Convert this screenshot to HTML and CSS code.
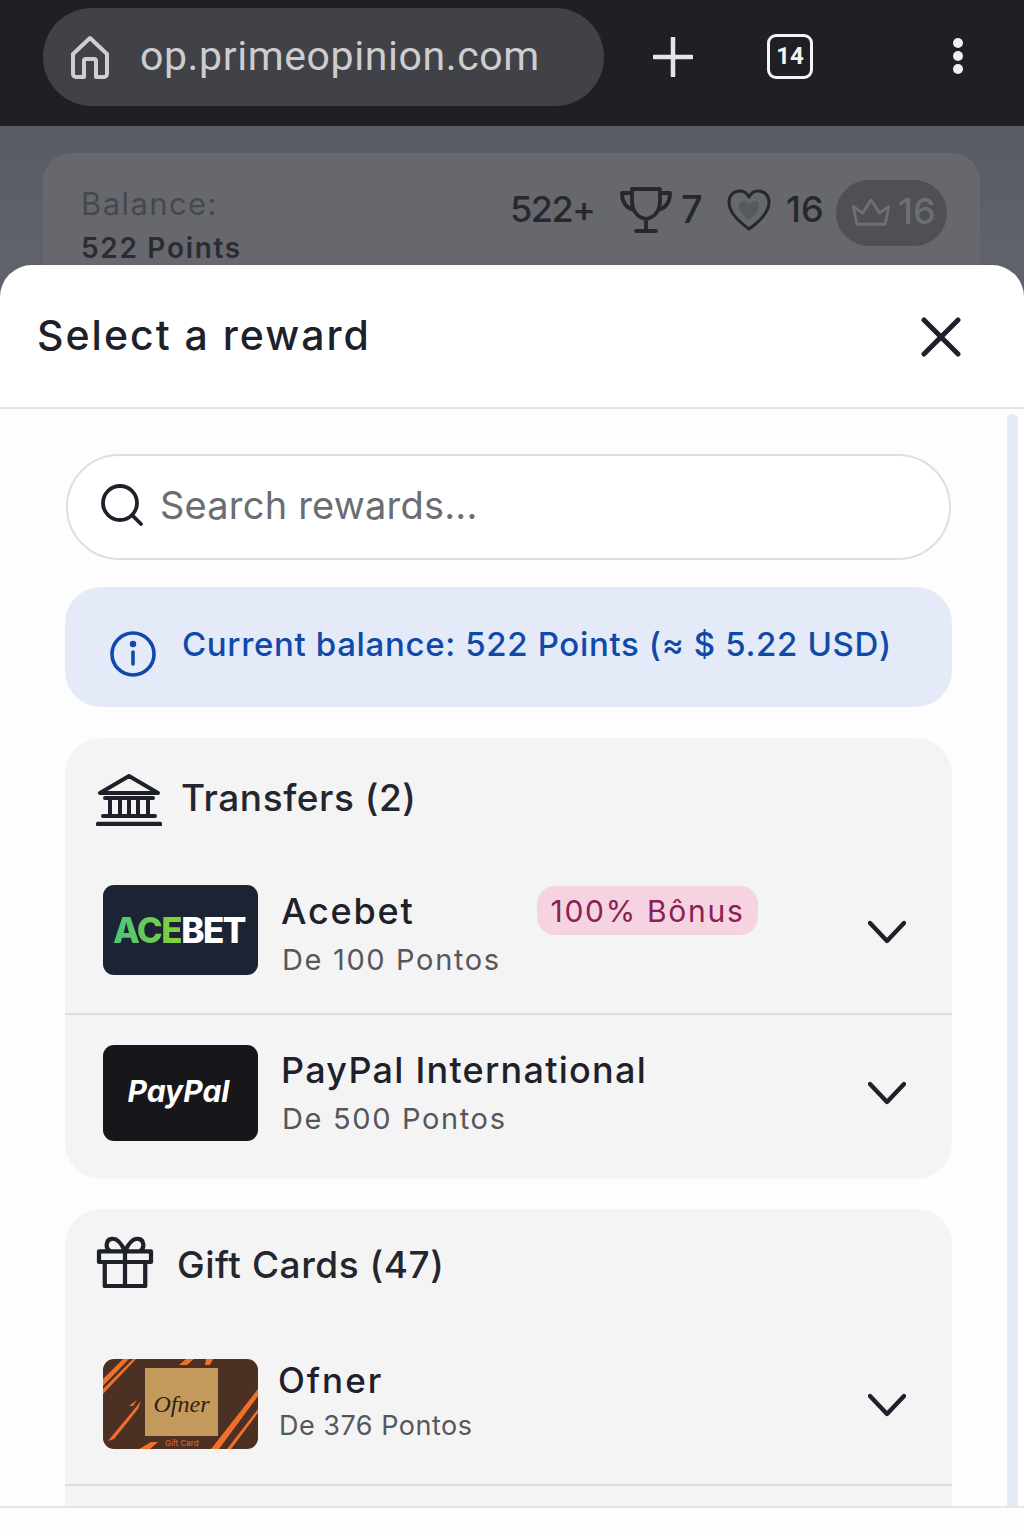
FILE: index.html
```html
<!DOCTYPE html>
<html lang="en">
<head>
<meta charset="utf-8">
<title>Select a reward</title>
<link rel="stylesheet" href="styles.css">
</head>
<body>
<div class="page">
  <header class="browser">
    <div class="address">
      <svg class="home-icon" viewBox="0 0 40 44" fill="none" stroke="currentColor" stroke-width="4" stroke-linejoin="round" stroke-linecap="round"><path d="M20 3 3 19v20a3 3 0 0 0 3 3h8V26a2 2 0 0 1 2-2h8a2 2 0 0 1 2 2v16h8a3 3 0 0 0 3-3V19Z"/></svg>
      <span class="url">op.primeopinion.com</span>
    </div>
    <svg class="plus" viewBox="0 0 40 40" fill="none" stroke="currentColor" stroke-width="4.5" stroke-linecap="round"><path d="M20 1v38M1 20h38"/></svg>
    <div class="tabs">14</div>
    <div class="dots"><i></i><i></i><i></i></div>
  </header>

  <section class="backdrop">
    <div class="stats-card">
      <div class="balance">
        <div class="balance-label">Balance:</div>
        <div class="balance-value">522 Points</div>
      </div>
      <div class="stats">
        <span class="stat s-points">522+</span>
        <svg class="trophy" viewBox="0 0 52 46" fill="none" stroke="currentColor" stroke-width="3.8" stroke-linejoin="round" stroke-linecap="round"><path d="M12 2h28v12c0 10-6 17-14 18-8-1-14-8-14-18ZM12 6H2c0 10 4 15 12 17M40 6h10c0 10-4 15-12 17M26 32v10M16 44h20"/></svg>
        <span class="stat s-seven">7</span>
        <svg class="heart" viewBox="0 0 44 42" stroke="currentColor" stroke-width="3" stroke-linejoin="round" fill="none"><path d="M22 40C10 31 2 23 2 13 2 6 7 2 13 2c4 0 7 2 9 6 2-4 5-6 9-6 6 0 11 4 11 11 0 10-8 18-20 27Z"/><path class="heart-fill" d="M22 31c-6-5-10-9-10-14 0-3 2-5 5-5 2 0 4 1 5 4 1-3 3-4 5-4 3 0 5 2 5 5 0 5-4 9-10 14Z"/></svg>
        <span class="stat s-sixteen">16</span>
        <div class="crown-pill">
          <svg class="crown" viewBox="0 0 42 32" fill="none" stroke="currentColor" stroke-width="3" stroke-linejoin="round"><path d="M6 28 2 9l10 7 9-14 9 14 10-7-4 19Z"/></svg>
          <span>16</span>
        </div>
      </div>
    </div>
  </section>

  <div class="sheet">
    <div class="sheet-head">
      <h1 class="sheet-title">Select a reward</h1>
      <svg class="close" viewBox="0 0 40 40" fill="none" stroke="currentColor" stroke-width="5" stroke-linecap="round"><path d="M3 3l34 34M37 3 3 37"/></svg>
    </div>
    <div class="sheet-body">
      <div class="scroll-content">
        <div class="search">
          <svg class="search-icon" viewBox="0 0 42 42" fill="none" stroke="currentColor" stroke-width="3.8" stroke-linecap="round"><circle cx="19" cy="19" r="17"/><path d="m31.500 31.500 8.500 8.500"/></svg>
          <span class="search-text">Search rewards...</span>
        </div>
        <div class="info">
          <svg class="info-icon" viewBox="0 0 46 46" fill="none" stroke="currentColor" stroke-width="3.6" stroke-linecap="round"><circle cx="23" cy="23" r="21"/><path d="M23 21v12"/><circle cx="23" cy="13" r="1.400" fill="currentColor"/></svg>
          <span class="info-text">Current balance: 522 Points (≈ $ 5.22 USD)</span>
        </div>

        <section class="group">
          <div class="group-head transfers-head">
            <svg class="bank-icon" viewBox="0 0 66 52" fill="none" stroke="currentColor" stroke-width="4" stroke-linejoin="round" stroke-linecap="round"><path d="M33 2 4 19h58ZM9 24h48M14 24v18M24 24v18M33 24v18M42 24v18M52 24v18M7 42h52"/><path stroke-width="4.4" d="M2 50h62"/></svg>
            <h2 class="group-title">Transfers (2)</h2>
          </div>
          <div class="row row-acebet">
            <div class="thumb thumb-acebet"><span class="ace">ACE</span><span class="bet">BET</span></div>
            <div class="row-info">
              <div class="row-name">Acebet</div>
              <div class="row-sub">De 100 Pontos</div>
            </div>
            <span class="badge">100% Bônus</span>
            <svg class="chev" viewBox="0 0 38 24" fill="none" stroke="currentColor" stroke-width="4.400" stroke-linecap="round" stroke-linejoin="round"><path d="m2 3 17 18L36 3"/></svg>
          </div>
          <div class="row row-paypal">
            <div class="thumb thumb-paypal">PayPal</div>
            <div class="row-info">
              <div class="row-name">PayPal International</div>
              <div class="row-sub">De 500 Pontos</div>
            </div>
            <svg class="chev" viewBox="0 0 38 24" fill="none" stroke="currentColor" stroke-width="4.400" stroke-linecap="round" stroke-linejoin="round"><path d="m2 3 17 18L36 3"/></svg>
          </div>
        </section>

        <section class="group group-gift">
          <div class="group-head gift-head">
            <svg class="gift-icon" viewBox="0 0 60 54" fill="none" stroke="currentColor" stroke-width="4.400" stroke-linejoin="round" stroke-linecap="round"><path d="M3 16h54v11H3ZM9 27v25h42V27M30 16v36M30 16c-4-9-9-14-14-13-6 1-7 10-1 13M30 16c4-9 9-14 14-13 6 1 7 10 1 13"/></svg>
            <h2 class="group-title">Gift Cards (47)</h2>
          </div>
          <div class="row row-ofner">
            <div class="thumb thumb-ofner">
              <svg class="ofner-stripes" viewBox="0 0 155 90" preserveAspectRatio="none" fill="#f0702a"><path d="M0 20 20 0h6L0 27ZM0 30 30 0h3L0 35ZM5 82l33-40-3 8-24 30ZM26 47l8-6-4 6ZM76 6l7-6h8l-7 6ZM102 6l1-6h7l-3 6ZM108 90l47-60v7l-39 53ZM124 90l31-40v4l-27 36ZM36 90l12-7h7l-8 7Z"/></svg>
              <div class="ofner-card"><span>Ofner</span></div>
              <span class="ofner-foot">Gift Card</span>
            </div>
            <div class="row-info row-info-ofner">
              <div class="row-name">Ofner</div>
              <div class="row-sub">De 376 Pontos</div>
            </div>
            <svg class="chev" viewBox="0 0 38 24" fill="none" stroke="currentColor" stroke-width="4.400" stroke-linecap="round" stroke-linejoin="round"><path d="m2 3 17 18L36 3"/></svg>
          </div>
        </section>
      </div>
      <div class="scrollbar"></div>
    </div>
    <div class="sheet-foot"></div>
  </div>
</div>
</body>
</html>
```

FILE: styles.css
```css
* { box-sizing: border-box; }
html, body { margin: 0; padding: 0; }
body { font-family: "Inter", "Liberation Sans", sans-serif; background: #fff; }
h1, h2 { margin: 0; font-weight: 500; }

.page { position: relative; width: 1024px; height: 1536px; overflow: hidden; background: #5a5d64; }

.browser { height: 126px; background: #202024; display: flex; align-items: flex-start; color: #e6e6e8; }
.address { margin: 8px 0 0 43px; width: 561px; height: 98px; border-radius: 49px; background: #414248; display: flex; align-items: center; padding-left: 27px; color: #cfcfd2; }
.home-icon { width: 40px; height: 44px; flex: none; }
.url { margin: -2px 0 0 30px; font-family: "Roboto", sans-serif; font-size: 41px; letter-spacing: 0.6px; color: #cdcdd0; }
.plus { width: 40px; height: 40px; margin: 37px 0 0 49px; flex: none; }
.tabs { margin: 34px 0 0 74px; width: 46px; height: 45px; border: 3.5px solid #f4f4f4; border-radius: 9px; color: #f4f4f4; font: 700 24px/38px "Roboto", sans-serif; text-align: center; flex: none; }
.dots { margin: 38px 0 0 140px; width: 11px; display: flex; flex-direction: column; gap: 3px; }
.dots i { display: block; width: 10px; height: 10px; border-radius: 50%; background: #f0f0f0; }

.backdrop { height: 1410px; padding: 27px 44px 0 43px; background: linear-gradient(#585b63, #5f6268 120px); }
.stats-card { height: 200px; border-radius: 28px; background: #66686e; display: flex; justify-content: space-between; padding: 27px 33px 0 38px; color: #26282d; }
.balance-label { font-size: 31px; color: #46484d; line-height: 46px; letter-spacing: 1.4px; margin-top: 1px; }
.balance-value { font-size: 28px; font-weight: 600; color: #2a2c31; line-height: 44px; margin-top: -1px; letter-spacing: 1.7px; }
.stats { display: flex; align-items: flex-start; height: 66px; }
.stat { font-size: 36px; font-weight: 500; line-height: 58px; }
.s-points { width: 110px; margin-left: -1px; letter-spacing: -1.5px; }
.trophy { width: 52px; height: 46px; margin-top: 7px; color: #26282d; flex: none; }
.s-seven { margin-left: 9px; width: 46px; font-size: 38px; }
.heart { width: 44px; height: 42px; margin-top: 9px; flex: none; }
.heart-fill { fill: #565960; stroke: none; }
.s-sixteen { margin-left: 15px; width: 50px; }
.crown-pill { width: 111px; height: 66px; border-radius: 33px; background: #4e5056; display: flex; align-items: center; padding-left: 15px; color: #6d6f75; font-size: 36px; font-weight: 500; }
.crown { width: 40px; height: 30px; }
.crown-pill span { margin: -4px 0 0 7px; }

.sheet { position: absolute; left: 0; right: 0; top: 265px; bottom: 0; background: #fff; border-radius: 32px 32px 0 0; display: flex; flex-direction: column; }
.sheet-head { height: 144px; flex: none; border-bottom: 2px solid #e4e4e8; display: flex; align-items: center; justify-content: space-between; padding: 0 63px 2px 37px; }
.sheet-title { font-size: 41px; font-weight: 500; color: #1f212a; letter-spacing: 2px; }
.close { width: 40px; height: 40px; color: #1f212a; margin-top: 4px; }
.sheet-body { flex: 1; min-height: 0; display: flex; background: #fdfdfe; overflow: hidden; }
.scroll-content { width: 952px; flex: none; padding: 45px 0 0 65px; }
.scrollbar { width: 11px; margin: 5px 0 0 55px; border-radius: 6px 6px 0 0; background: #e6e9f6; }
.sheet-foot { height: 30px; flex: none; border-top: 2px solid #e6e6ea; background: #fdfdfe; }

.search { height: 106px; margin: 0 1px; border: 2px solid #dedee2; border-radius: 53px; background: #fff; display: flex; align-items: center; padding: 0 0 4px 33px; }
.search-icon { width: 42px; height: 42px; color: #1f212a; flex: none; }
.search-text { margin-left: 17px; font-size: 38px; color: #6b6d72; letter-spacing: 0.2px; }

.info { margin-top: 27px; height: 120px; border-radius: 36px; background: #e4eaf8; display: flex; align-items: flex-start; padding: 0 0 0 45px; color: #104aa8; }
.info-icon { width: 46px; height: 46px; margin-top: 44px; flex: none; }
.info-text { margin: 34px 0 0 26px; font-size: 33px; line-height: 46px; white-space: nowrap; font-weight: 500; letter-spacing: 0.65px; }

.group { margin-top: 31px; border-radius: 36px; background: #f4f4f5; padding-bottom: 8px; }
.group-gift { margin-top: 30px; padding-bottom: 80px; }
.group-head { display: flex; align-items: center; padding-left: 31px; color: #1f212a; }
.transfers-head { height: 108px; padding-top: 16px; }
.gift-head { height: 114px; }
.group-title { font-size: 37px; font-weight: 500; color: #24262e; letter-spacing: 0.55px; }
.bank-icon { width: 66px; height: 52px; flex: none; }
.transfers-head .group-title { margin: -6px 0 0 19px; }
.gift-icon { width: 58px; height: 52px; flex: none; margin-top: -8px; }
.gift-head .group-title { margin: -4px 0 0 23px; }

.row { display: flex; align-items: center; padding-left: 38px; padding-right: 46px; }
.row-acebet { height: 167px; }
.row-paypal { height: 158px; border-top: 2px solid #dcdce0; }
.row-ofner { height: 163px; border-bottom: 2px solid #dcdce0; }
.thumb { width: 155px; flex: none; border-radius: 11px; overflow: hidden; }
.thumb-acebet { height: 90px; background: #1c2333; display: flex; align-items: center; justify-content: center; padding-right: 3px; font: 800 35px "Inter", sans-serif; letter-spacing: -1.5px; }
.ace { background: linear-gradient(90deg, #4cc47c, #84d238); -webkit-background-clip: text; background-clip: text; color: transparent; }
.bet { color: #fff; }
.thumb-paypal { height: 96px; background: #17171b; color: #fff; font: italic 700 30px/92px "Inter", sans-serif; text-align: center; padding-right: 4px; }
.thumb-ofner { height: 90px; background: #4b3023; position: relative; }
.ofner-stripes { position: absolute; inset: 0; width: 100%; height: 100%; }
.ofner-card { position: absolute; left: 42px; top: 9px; width: 73px; height: 68px; background: #c49a5c; display: flex; align-items: center; justify-content: center; }
.ofner-card span { font: italic 400 24px "Liberation Serif", serif; color: #2c2118; margin-top: 6px; }
.ofner-foot { position: absolute; left: 62px; bottom: 1px; font-size: 8px; color: #ea6a26; }

.row-info { margin: 10px 0 0 23px; width: 256px; flex: none; }
.row-paypal .row-info { flex: 1; margin-top: 2px; }
.row-info-ofner { margin: -3px 0 0 20px; flex: 1; }
.row-name { font-size: 36px; font-weight: 500; color: #1f212a; line-height: 46px; white-space: nowrap; letter-spacing: 1.8px; }
.row-paypal .row-name { letter-spacing: 1.25px; }
.row-sub { font-size: 29px; color: #55575c; line-height: 44px; margin: 4px 0 0 1px; white-space: nowrap; letter-spacing: 1.65px; }
.row-ofner .row-name { font-size: 35px; letter-spacing: 2px; }
.row-ofner .row-sub { font-size: 27px; letter-spacing: 0.5px; margin: 1px 0 0 1px; }
.badge { height: 49px; width: 221px; border-radius: 18px; background: #f6d3e0; color: #8a2058; font-size: 30px; line-height: 50px; letter-spacing: 1.7px; text-align: center; flex: none; margin-top: -39px; white-space: nowrap; }
.chev { width: 38px; height: 24px; margin-left: auto; color: #1f212a; flex: none; }
.row-acebet .chev { margin-top: 4px; }
.row-ofner .chev { margin-top: 2px; }
```
